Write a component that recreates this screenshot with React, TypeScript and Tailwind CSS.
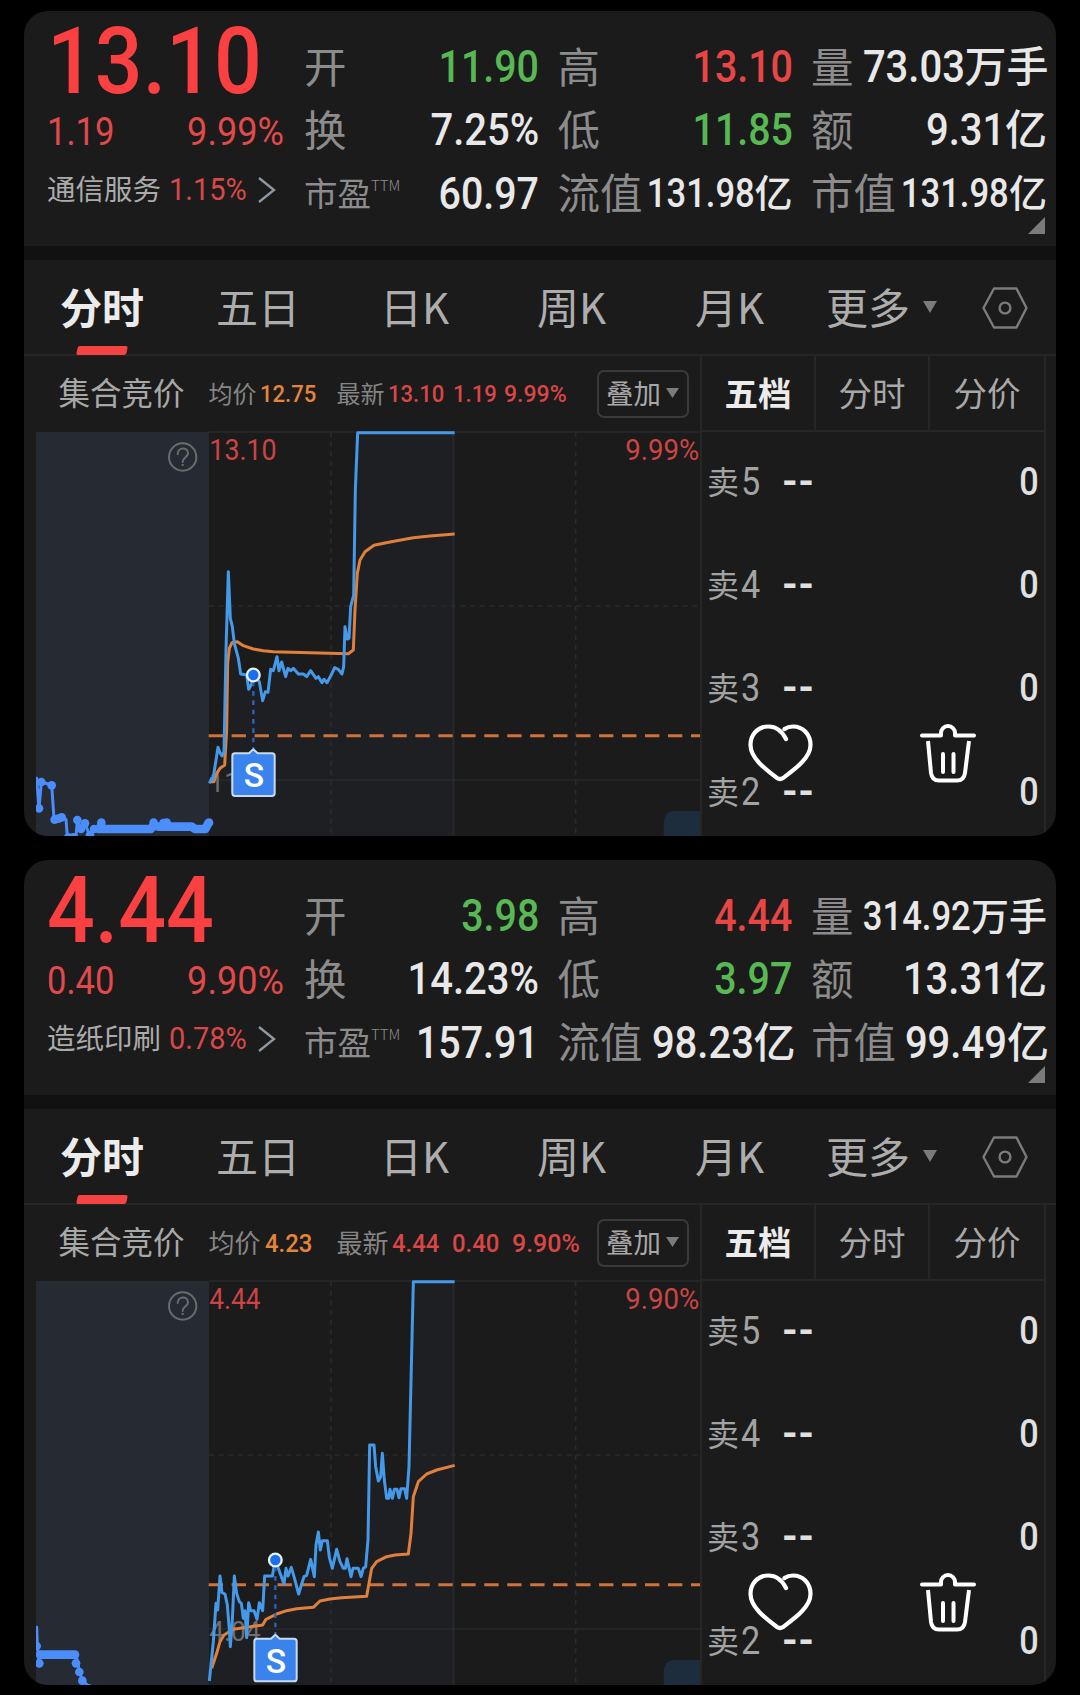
import React from 'react';
import clsx from 'clsx';

// ── Types ────────────────────────────────────────────────────────────────────
type Tone = 'up' | 'down' | 'flat';

interface Quote {
  label: string;
  value: string;
  unit?: string;
  tone?: Tone;
  sup?: string;
  compact?: boolean;
}

interface ChartData {
  high: string;
  highPct: string;
  base: string;
  price: string;
  average: string;
  auction: string;
  auctionDots: [number, number][];
  auctionBars: string;
  marker: { x: number; y: number; boxY: number };
}

interface Stock {
  price: string;
  change: string;
  pct: string;
  sector: string;
  sectorPct: string;
  avg: string;
  dense: boolean;
  quotes: Quote[][];
  chart: ChartData;
}

// ── Data ─────────────────────────────────────────────────────────────────────
const STOCKS: Stock[] = [
  {
    price: '13.10',
    change: '1.19',
    pct: '9.99%',
    sector: '通信服务',
    sectorPct: '1.15%',
    avg: '12.75',
    dense: true,
    quotes: [
      [
        { label: '开', value: '11.90', tone: 'down' },
        { label: '换', value: '7.25%' },
        { label: '市盈', sup: 'TTM', value: '60.97' },
      ],
      [
        { label: '高', value: '13.10', tone: 'up' },
        { label: '低', value: '11.85', tone: 'down' },
        { label: '流值', value: '131.98', unit: '亿', compact: true },
      ],
      [
        { label: '量', value: '73.03', unit: '万手' },
        { label: '额', value: '9.31', unit: '亿' },
        { label: '市值', value: '131.98', unit: '亿', compact: true },
      ],
    ],
    chart: {
      high: '13.10',
      highPct: '9.99%',
      base: '11.91',
      price:
        '568,1060 575,1045 579,1048 594,952 600,968 606,978 612,965 618,660 625,425 631,565 637,590 643,640 655,685 662,732 680,735 686,778 695,762 700,735 718,755 728,812 736,785 744,787 752,718 760,722 771,680 777,722 785,696 797,740 804,715 812,722 820,715 835,732 850,732 860,740 872,722 888,745 895,740 906,758 912,748 921,758 932,738 944,713 955,718 966,732 971,710 975,590 982,627 987,625 992,530 1001,495 1006,180 1013,8 1304,8',
      average:
        '570,1055 582,1055 590,1030 600,1015 614,1005 620,900 623,700 628,655 636,638 652,635 670,647 700,657 730,662 760,665 870,668 985,671 1000,660 1005,540 1012,430 1020,390 1035,365 1062,346 1110,336 1180,323 1230,318 1304,312',
      auction:
        '50,1045 57,1135 64,1056 95,1065 102,1165 125,1162 138,1168 142,1220 168,1220 172,1170 183,1195 195,1180 208,1215 222,1197 244,1178',
      auctionDots: [
        [57, 1135], [64, 1056], [95, 1066], [104, 1169], [115, 1166], [125, 1162], [145, 1222],
        [160, 1222], [172, 1170], [183, 1197], [195, 1180], [210, 1215], [222, 1197], [244, 1178],
        [401, 1178], [430, 1179], [440, 1178], [567, 1178],
      ],
      auctionBars: 'M235 1197H392L401 1186L415 1190H515L525 1197H556L565 1180',
      marker: { x: 700, y: 735, boxY: 970 },
    },
  },
  {
    price: '4.44',
    change: '0.40',
    pct: '9.90%',
    sector: '造纸印刷',
    sectorPct: '0.78%',
    avg: '4.23',
    dense: false,
    quotes: [
      [
        { label: '开', value: '3.98', tone: 'down' },
        { label: '换', value: '14.23%' },
        { label: '市盈', sup: 'TTM', value: '157.91' },
      ],
      [
        { label: '高', value: '4.44', tone: 'up' },
        { label: '低', value: '3.97', tone: 'down' },
        { label: '流值', value: '98.23', unit: '亿' },
      ],
      [
        { label: '量', value: '314.92', unit: '万手', compact: true },
        { label: '额', value: '13.31', unit: '亿' },
        { label: '市值', value: '99.49', unit: '亿' },
      ],
    ],
    chart: {
      high: '4.44',
      highPct: '9.90%',
      base: '4.04',
      price:
        '568,1206 580,1088 588,973 593,993 600,891 606,941 615,945 622,978 628,1053 631,1103 637,1023 643,891 650,943 658,968 664,973 670,1018 675,995 680,1076 686,971 692,995 702,995 711,1021 718,971 728,995 734,891 757,891 766,843 775,868 792,915 798,868 804,891 814,865 822,893 836,945 845,915 852,893 860,889 872,841 883,893 888,798 895,759 901,813 907,785 922,785 928,835 937,868 950,811 960,848 970,868 976,868 981,839 993,893 999,868 1015,868 1023,893 1030,868 1037,863 1044,783 1049,498 1062,498 1067,563 1075,606 1082,593 1087,523 1093,603 1100,658 1106,658 1110,631 1117,658 1123,631 1131,631 1137,656 1143,629 1154,629 1160,658 1167,563 1180,8 1304,8',
      average:
        '575,1168 590,1123 600,1088 612,1068 640,1051 680,1045 728,1038 738,1021 770,1005 800,995 830,989 880,985 900,966 930,960 965,956 1040,952 1047,913 1055,868 1070,848 1100,833 1125,828 1165,825 1173,763 1180,653 1195,608 1220,585 1250,573 1304,559',
      auction: '50,1045 52,1098 57,1150 60,1127 168,1127 178,1175 187,1205 210,1225',
      auctionDots: [
        [50, 1101], [58, 1153], [168, 1153], [178, 1179], [187, 1205], [206, 1228],
      ],
      auctionBars: 'M60 1127H165',
      marker: { x: 766, y: 843, boxY: 1079 },
    },
  },
];

const PERIODS = [
  { label: '分时', cell: 'w-[142px] pl-[36px]' },
  { label: '五日', cell: 'w-[171px] pl-[50px]' },
  { label: '日K', cell: 'w-[157px] pl-[43px]' },
  { label: '周K', cell: 'w-[157px] pl-[43px]' },
  { label: '月K', cell: 'w-[165px] pl-[44px]' },
];

const BOOK_TABS = ['五档', '分时', '分价'];
const SELL_LEVELS = [5, 4, 3, 2];

const TONES: Record<Tone, string> = {
  up: 'text-[#e84545]',
  down: 'text-[#57b854]',
  flat: 'text-[#e8e8e8]',
};

const CJK = "font-['Noto_Sans_CJK_SC',sans-serif]";

// ── Header ───────────────────────────────────────────────────────────────────
function QuoteCell({ label, value, unit, tone = 'flat', sup, compact }: Quote) {
  return (
    <div className="flex h-[63.3px] items-center justify-between leading-[63px] whitespace-nowrap">
      <span className={clsx(CJK, 'flex text-[#8c8c8c]', sup ? 'pb-[3px] text-[33.5px]' : 'pb-[5px] text-[42.5px]')}>
        {label}
        {sup && <sup className="top-0 text-[15px] leading-[49px] font-light">{sup}</sup>}
      </span>
      <span className={clsx('flex items-baseline justify-end pt-[2px] font-medium', TONES[tone], compact ? 'w-0 text-[40px]' : 'text-[43.5px]')}>
        <span className={clsx(
          'inline-block origin-right',
          compact ? 'scale-x-[.865]' : unit || value.endsWith('%') ? 'scale-x-[.92]' : 'scale-x-[.905]',
        )}>
          {value}
        </span>
        {unit && <span className={compact ? 'text-[38px]' : 'text-[42px]'}>{unit}</span>}
      </span>
    </div>
  );
}

function Header({ stock }: { stock: Stock }) {
  return (
    <div className="relative flex h-[234.5px]">
      <div className="w-[280px] pl-[23px]">
        <div className="h-[98px] pt-[2px] text-[92px] leading-[98px] font-medium text-[#fa4040]">
          <span className="inline-block origin-left scale-x-[.915]">{stock.price}</span>
        </div>
        <div className="flex h-[45px] w-[237px] justify-between pt-px text-[38px] leading-[45px] text-[#e04a4a]">
          <span className="inline-block origin-left scale-x-[.91]">{stock.change}</span>
          <span className="inline-block origin-right scale-x-[.95]">{stock.pct}</span>
        </div>
        <div className="flex h-[68px] items-center">
          <span className={clsx(CJK, 'w-[123px] text-[28.5px] leading-[68px] text-[#ababab]')}>{stock.sector}</span>
          <span className="flex w-[77px] justify-end pt-[3px] text-[30.5px] text-[#d94848]">
            <span className="inline-block origin-right scale-x-[.95]">{stock.sectorPct}</span>
          </span>
          <svg className="mt-[3px] ml-[10px]" width="20" height="28" viewBox="0 0 20 28" fill="none">
            <path d="M2 2L17 14L2 26" stroke="#8e99a3" strokeWidth="2.3" />
          </svg>
        </div>
      </div>
      <div className="grid grid-cols-[235px_235px_236px] gap-x-[18.5px] pt-[24px]">
        {stock.quotes.map((col, i) => (
          <div key={i}>
            {col.map(q => <QuoteCell key={q.label} {...q} />)}
          </div>
        ))}
      </div>
      <svg className="absolute right-[11px] bottom-[11.5px]" width="17" height="17" viewBox="0 0 17 17">
        <path d="M17 0V17H0Z" fill="#7b7b7b" />
      </svg>
    </div>
  );
}

// ── Period tabs ──────────────────────────────────────────────────────────────
function PeriodTabs() {
  return (
    <div className={clsx(CJK, 'flex h-[96px] items-center border-b-2 border-[#262626] text-[42px] leading-[94px] text-[#adadad]')}>
      {PERIODS.map((p, i) => (
        <div key={p.label} className={clsx('relative h-[94px] leading-[92px] whitespace-nowrap', p.cell, i === 0 && 'font-bold text-[#ebebeb]')}>
          {p.label}
          {i === 0 && (
            <span className="absolute -bottom-px left-[53px] h-[9px] w-[50px] -skew-x-12 rounded-[2px] bg-[#f54242]" />
          )}
        </div>
      ))}
      <div className="flex h-[94px] items-center pl-[10px] leading-[92px] whitespace-nowrap">
        <span className="h-[94px]">更多</span>
        <svg className="ml-[13px]" width="14" height="12" viewBox="0 0 14 12">
          <path d="M0 0H14L7 12Z" fill="#7b7b7b" />
        </svg>
        <svg className="mt-[2px] ml-[45px]" width="46" height="42" viewBox="0 0 46 42" fill="none" stroke="#7b7b7b" strokeWidth="2.4">
          <path d="M12 1.5H34.5L44.5 21L34.5 40.5H12L1.5 21Z" strokeLinejoin="round" />
          <circle cx="23" cy="21" r="5.4" />
        </svg>
      </div>
    </div>
  );
}

// ── Info row over the chart ──────────────────────────────────────────────────
function InfoRow({ stock }: { stock: Stock }) {
  const { dense } = stock;
  const nums = 'inline-block origin-left scale-x-[.9]';
  const label = clsx(CJK, 'pb-[2px] font-normal text-[#858585]', dense ? 'text-[24px]' : 'text-[26px]');
  return (
    <div className={clsx(
      'flex h-[75px] items-center pl-[34.5px] leading-[70px] font-medium whitespace-nowrap',
      dense ? 'text-[24.5px]' : 'text-[26.5px]',
    )}>
      <span className={clsx(CJK, 'w-[150px] pb-[5px] text-[31.5px] font-normal text-[#a8a8a8]')}>集合竞价</span>
      <span className={clsx(label, dense ? 'w-[51px]' : 'w-[56px]')}>均价</span>
      <span className={clsx('pt-px text-[#e5853a]', dense ? 'w-[77px]' : 'w-[72px]')}>
        <span className={nums}>{stock.avg}</span>
      </span>
      <span className={clsx(label, dense ? 'w-[51.5px]' : 'w-[55.5px]')}>最新</span>
      <span className={clsx('pt-px text-[#d94646]', dense ? 'w-[65px]' : 'w-[60px]')}>
        <span className={nums}>{stock.price}</span>
      </span>
      <span className={clsx('pt-px text-[#d94646]', dense ? 'w-[51px]' : 'w-[60px]')}>
        <span className={nums}>{stock.change}</span>
      </span>
      <span className={clsx('pt-px text-[#d94646]', dense ? 'w-[93px]' : 'w-[85px]')}>
        <span className="inline-block origin-left scale-x-[.94]">{stock.pct}</span>
      </span>
      <button className={clsx(CJK, 'flex h-[48px] w-[92px] shrink-0 items-center rounded-[7px] border-2 border-[#3a3a3a] pb-[2px] pl-[7px] text-[27.5px] leading-none font-normal text-[#a8a8a8]')}>
        叠加
        <svg className="mt-px ml-[5px]" width="13" height="10" viewBox="0 0 13 10">
          <path d="M0 0H13L6.5 10Z" fill="#7b7b7b" />
        </svg>
      </button>
    </div>
  );
}

// ── Intraday chart ───────────────────────────────────────────────────────────
function Chart({ data }: { data: ChartData }) {
  const { marker: m } = data;
  return (
    <svg
      className="ml-[12px] block font-[Roboto,sans-serif]"
      width="665" height="405" viewBox="48 3 1995 1215" fill="none"
    >
      <polygon points={`${data.price} 1304,1220 568,1220`} fill="#1d1f23" />
      <rect x="48" y="6" width="519" height="1215" fill="#262a33" />

      {/* grid */}
      <g stroke="#292a2c" strokeWidth="5">
        <path d="M567 6H2043M567 1050H2043M1300 6V1220" />
        <path d="M567 528H2043M933 6V1220M1667 6V1220" strokeDasharray="15 14" />
      </g>
      <path d="M1931 1220V1183Q1931 1143 1967 1143H2043V1220Z" fill="#1e2d3d" />

      <text x="568" y="1086" fontSize="84" fill="#6e6e6e" textLength={data.base.length * 46 - 30} lengthAdjust="spacingAndGlyphs">{data.base}</text>
      <path d="M566 917H2043" stroke="#d0733b" strokeWidth="9" strokeDasharray="43 25.9" />
      <polyline points={data.average} stroke="#e0803c" strokeWidth="9" strokeLinejoin="round" />
      <polyline points={data.price} stroke="#4499e8" strokeWidth="9" strokeLinejoin="round" />

      {/* call auction */}
      <g stroke="#4a8dfb" strokeLinejoin="round" strokeLinecap="round">
        <polyline points={data.auction} strokeWidth="9" />
        <path d={data.auctionBars} strokeWidth="26" />
        {data.auctionDots.map(([x, y]) => (
          <circle key={x} cx={x} cy={y} r="13" fill="#4a8dfb" stroke="none" />
        ))}
      </g>
      <g stroke="#6b6b6b" strokeWidth="6">
        <circle cx="488" cy="81" r="41" />
        <path d="M473 72C473 50 504 50 504 70C504 82 488 82 488 96" strokeLinecap="round" />
        <path d="M488 102V108" />
      </g>

      {/* sell marker */}
      <path d={`M${m.x} ${m.y + 20}V${m.boxY - 14}`} stroke="#2c62b8" strokeWidth="7" strokeDasharray="14 14" />
      <circle cx={m.x} cy={m.y} r="19" fill="#1a6fee" stroke="#e8f0fa" strokeWidth="7" />
      <path
        d={`M${m.x - 55} ${m.boxY}H${m.x - 13}L${m.x} ${m.boxY - 12}L${m.x + 13} ${m.boxY}H${m.x + 56}Q${m.x + 64} ${m.boxY} ${m.x + 64} ${m.boxY + 8}V${m.boxY + 120}Q${m.x + 64} ${m.boxY + 128} ${m.x + 56} ${m.boxY + 128}H${m.x - 55}Q${m.x - 63} ${m.boxY + 128} ${m.x - 63} ${m.boxY + 120}V${m.boxY + 8}Q${m.x - 63} ${m.boxY} ${m.x - 55} ${m.boxY}Z`}
        fill="#3a83ec" stroke="#c9d9f0" strokeWidth="6" strokeLinejoin="round"
      />
      <text x={m.x + 2} y={m.boxY + 102} fontSize="101" fontWeight="500" fill="#fff" textAnchor="middle">S</text>

      <g fontSize="86" fill="#cc4444">
        <text x="568" y="89" textLength={data.high.length === 5 ? 202 : 153} lengthAdjust="spacingAndGlyphs">{data.high}</text>
        <text x="2038" y="89" textAnchor="end" textLength="222" lengthAdjust="spacingAndGlyphs">{data.highPct}</text>
      </g>
    </svg>
  );
}

// ── Order book ───────────────────────────────────────────────────────────────
function OrderBook() {
  return (
    <div className="h-full w-[346px] border-x-2 border-[#262626]">
      <div className={clsx(CJK, 'grid h-[76px] grid-cols-3 divide-x-2 divide-[#262626] border-b-2 border-[#262626] text-center text-[33.5px] leading-[71px] text-[#a8a8a8]')}>
        {BOOK_TABS.map((t, i) => (
          <div key={t} className={clsx(i === 0 && 'font-bold text-[#ebebeb]')}>{t}</div>
        ))}
      </div>
      {SELL_LEVELS.map(n => (
        <div key={n} className="flex h-[103.2px] items-baseline pr-[5px] pl-[5px] text-[38px] leading-[98px]">
          <span className={clsx(CJK, 'w-[34px] text-[32px] leading-[98px] text-[#a3a3a3]')}>
            <span className="relative -top-px">卖</span>
          </span>
          <span className="w-[41px] text-[#a3a3a3]">
            <span className="inline-block origin-left scale-x-[.9]">{n}</span>
          </span>
          <span className="flex-1 text-[40px] font-bold tracking-[0.5px] text-[#e0e0e0]">--</span>
          <span className="inline-block origin-right scale-x-[.9] font-medium text-[#e0e0e0]">0</span>
        </div>
      ))}
    </div>
  );
}

// Floating actions over the order book
function Actions() {
  return (
    <div className="absolute top-[711.5px] left-[724px] flex w-[229.5px] justify-between">
      <svg width="65" height="60" viewBox="-1 -2 65 60" fill="none" stroke="#fff" strokeWidth="4.2" strokeLinecap="round">
        <path d="M37 14C33 6 27 1.5 19.5 1.5C9 1.5 1.5 9.5 1.5 20C1.5 33 16 44 28 53Q31 55 34 53C46 44 61.5 33 61.5 20C61.5 9.5 54 1.5 44 1.5Q39 1.5 35.5 4" />
      </svg>
      <svg width="60" height="62" viewBox="-2 -1 60 62" fill="none" stroke="#fff" strokeWidth="4" strokeLinecap="round">
        <path d="M2 11.5H21V9A7 7 0 0 1 35 9V11.5H54" strokeLinejoin="round" />
        <path d="M8 17L11 49Q12 56.5 19 56.5H37Q44 56.5 45 49L49 17" strokeLinecap="butt" />
        <path d="M23 30V48M33.5 30V48" />
      </svg>
    </div>
  );
}

function StockCard({ stock }: { stock: Stock }) {
  return (
    <section className="relative h-[825px] overflow-hidden rounded-[24px] bg-[#1b1b1b]">
      <Header stock={stock} />
      <div className="h-[14.5px] bg-[#111]" />
      <PeriodTabs />
      <div className="flex h-[480px]">
        <div className="w-[676px] shrink-0">
          <InfoRow stock={stock} />
          <Chart data={stock.chart} />
        </div>
        <OrderBook />
      </div>
      <Actions />
    </section>
  );
}

export default function App() {
  return (
    <main className="flex h-[1695px] w-[1080px] flex-col gap-[24px] bg-black px-[24px] pt-[11px] font-[Roboto,'Noto_Sans_CJK_SC',sans-serif]">
      {STOCKS.map(s => <StockCard key={s.sector} stock={s} />)}
    </main>
  );
}
